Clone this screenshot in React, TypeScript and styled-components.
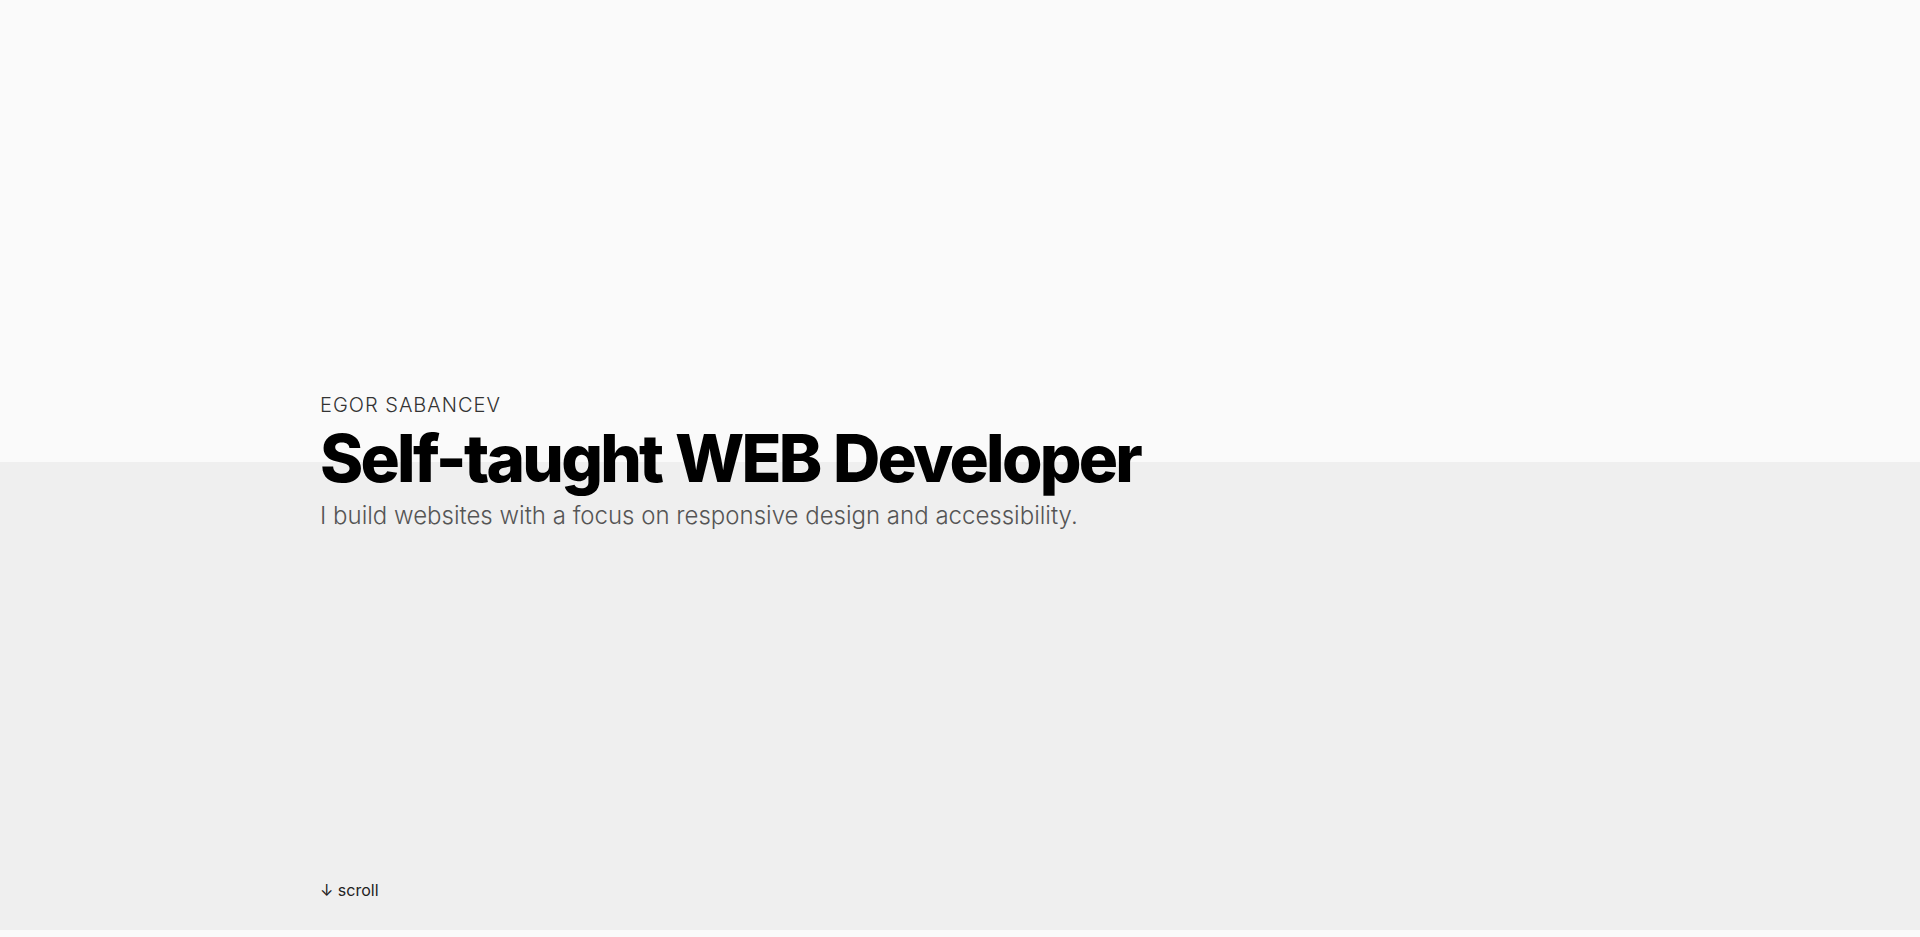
import React from "react";
import styled, { createGlobalStyle } from "styled-components";

const Global = createGlobalStyle`
  html, body { margin: 0; padding: 0; background: #fafafa; }
  body { font-family: Inter, "Noto Sans", sans-serif; color: #111; }
  * { box-sizing: border-box; }
`;

const Hero = styled.section`
  height: 930px;
  background: linear-gradient(to bottom, #fafafa 0, #fafafa 462px, #efefef 462px, #efefef 100%);
  display: grid;
  grid-template-rows: 1fr auto;
`;

const Container = styled.div`
  width: 1280px;
  margin: 0 auto;
`;

const Intro = styled(Container)`
  display: flex;
  flex-direction: column;
  justify-content: center;
  padding-top: 43px;
`;

const Name = styled.p`
  margin: 0;
  font-size: 20px;
  font-weight: 300;
  letter-spacing: 0.05em;
  color: #333;
  line-height: 26px;
`;

const Title = styled.h1`
  margin: 0;
  font-size: 65.5px;
  font-weight: 800;
  letter-spacing: -0.042em;
  word-spacing: 0.03em;
  line-height: 82px;
  color: #000;
`;

const Lead = styled.p`
  margin: 0;
  font-size: 24px;
  font-weight: 300;
  color: #555;
  line-height: 31px;
`;

const Footer = styled(Container)`
  padding-bottom: 30px;
`;

const Scroll = styled.a`
  font-size: 16px;
  font-weight: 400;
  color: #222;
  text-decoration: none;
`;

export default function App() {
  return (
    <>
      <Global />
      <Hero>
        <Intro>
          <Name>EGOR SABANCEV</Name>
          <Title>Self-taught WEB Developer</Title>
          <Lead>I build websites with a focus on responsive design and accessibility.</Lead>
        </Intro>
        <Footer>
          <Scroll href="#">↓ scroll</Scroll>
        </Footer>
      </Hero>
    </>
  );
}
